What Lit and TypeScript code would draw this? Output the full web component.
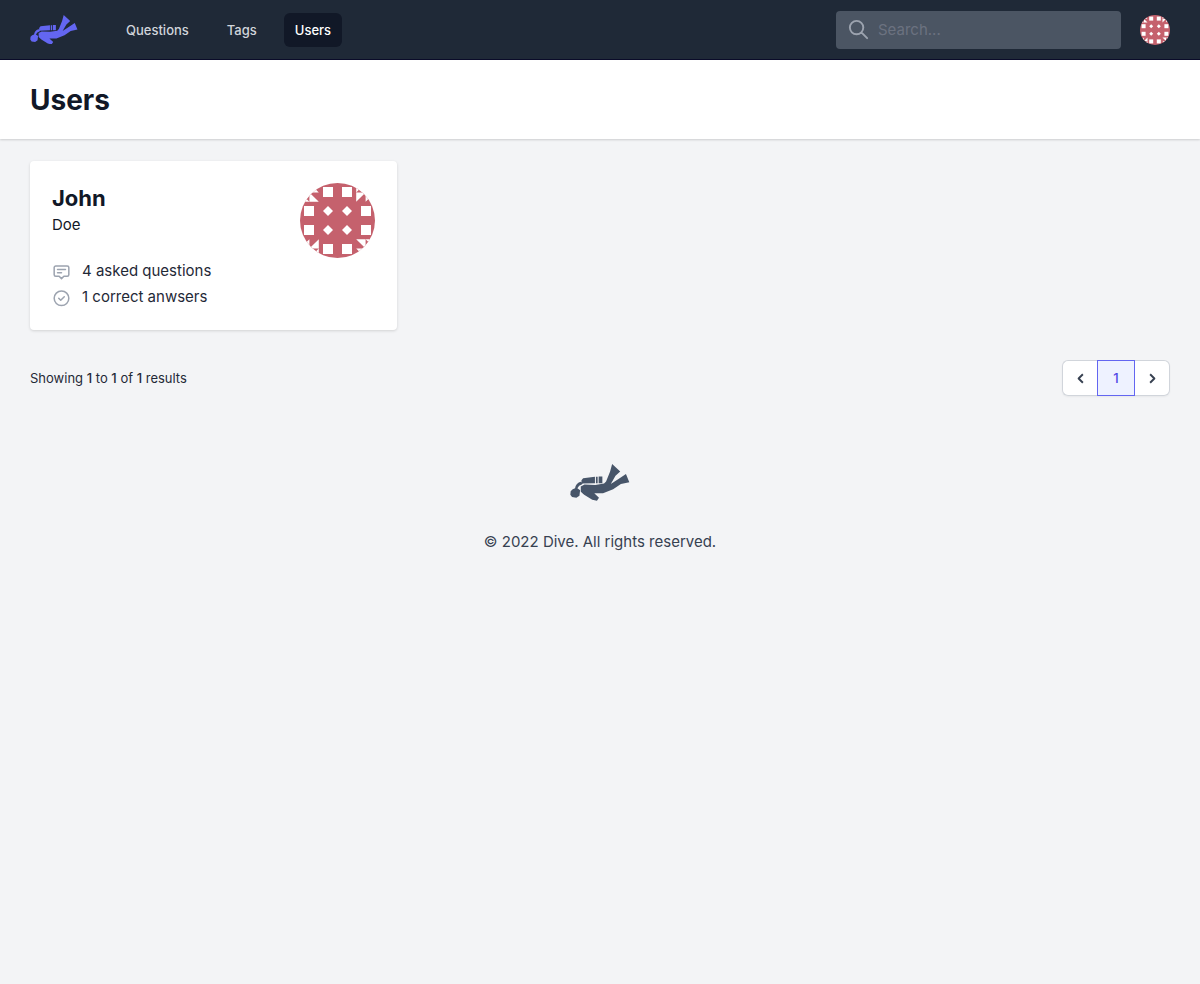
import { LitElement, html, css, svg } from "lit";
import { customElement, property } from "lit/decorators.js";

const squares = [[28, 9], [47, 9], [9, 28], [66, 28], [9, 47], [66, 47], [28, 66], [47, 66]];
const diamonds = [[28, 28], [47, 28], [28, 47], [47, 47]];

@customElement("dive-logo")
export class DiveLogo extends LitElement {
  static styles = css`
    :host { display: block; }
    .mark { display: block; width: 100%; height: auto; fill: currentColor; }
  `;
  render() {
    return html`<svg class="mark" viewBox="0 0 178 110" role="img" aria-label="Dive">
      <path d="M2 81 L8 75 L15 72 Q17 58 31 53 L38 56 L35 61 Q26 63 22 72 L30 78 L28 94 L19 100 L6 98 L1 91Z" />
      <path d="M39 42 L74 38 L74 57 L34 58 L34 48Z M77 38 L82 38 L82 57 L77 57Z M85 37 L96 37 L96 57 L85 57Z" />
      <path d="M32 67 L43 61 L75 62 L101 58 L107 52 L119 22 L125 0 L149 22 L135 35 L121 59 L145 44 L166 30 L176 54 L151 59 L128 75 L98 87 L72 87 L86 100 L80 109 L66 106 L42 91 L32 82Z" />
    </svg>`;
  }
}

@customElement("user-avatar")
export class UserAvatar extends LitElement {
  static styles = css`
    :host { display: block; border-radius: 50%; overflow: hidden; }
    .pattern { display: block; width: 100%; height: auto; }
  `;
  render() {
    return html`<svg class="pattern" viewBox="0 0 75 75" role="img" aria-label="John Doe">
      <rect width="75" height="75" fill="#c5616d" />
      <g fill="#fff">
        ${squares.map(([x, y]) => svg`<rect x=${x - 5} y=${y - 5} width="10" height="10" />`)}
        ${diamonds.map(([x, y]) => svg`<path d="M${x} ${y - 5}l5 5-5 5-5-5z" />`)}
        ${[0, 90, 180, 270].map((a) => svg`<path transform="rotate(${a} 37.5 37.5)" d="M9.400 0V9.400H18.800ZM9.400 9.400V18.800H18.800ZM0 9.400V18.800H9.400Z" />`)}
      </g>
    </svg>`;
  }
}

@customElement("app-root")
export class AppRoot extends LitElement {
  @property() query = "";

  static styles = css`
    :host {
      display: block;
      min-height: 100vh;
      background: #f3f4f6;
      color: #111827;
      font: 15px/22px Inter, sans-serif;
    }
    * { box-sizing: border-box; }
    h1, h2, p, ul { margin: 0; padding: 0; }
    ul { list-style: none; }
    a { color: inherit; text-decoration: none; }
    .bar {
      display: flex;
      align-items: center;
      height: 60px;
      padding: 0 30px;
      background: #1f2937;
      border-bottom: 1px solid #0b0c2a;
    }
    .brand { width: 48px; color: #6366f1; }
    .nav { display: flex; gap: 16px; margin-left: 37px; }
    .link {
      padding: 7px 11px;
      border-radius: 6px;
      color: #d1d5db;
      font-size: 13px;
      line-height: 20px;
      font-weight: 500;
    }
    .current { background: #111827; color: #fff; }
    .search {
      display: flex;
      align-items: center;
      gap: 8px;
      width: 25%;
      height: 38px;
      margin-left: auto;
      padding: 0 11px;
      border-radius: 4px;
      background: #4b5563;
      color: #9ca3af;
    }
    .glass { flex: none; width: 23px; height: 23px; }
    .field {
      flex: 1;
      min-width: 0;
      padding: 0;
      border: 0;
      outline: 0;
      background: none;
      color: #fff;
      font: inherit;
    }
    .field::placeholder { color: #6b7280; opacity: 1; }
    .account { padding: 0; border: 0; background: none; margin-left: 19px; border-radius: 50%; }
    .small { width: 30px; }
    .heading { padding: 22px 30px 21px; background: #fff; box-shadow: 0 1px 2px rgb(0 0 0 / 16%); }
    .title { font-size: 28px; line-height: 36px; font-weight: 700; }
    .content { padding: 22px 30px 0; }
    .grid { display: grid; grid-template-columns: repeat(3, minmax(0, 1fr)); gap: 19px; }
    .card {
      display: flex;
      align-items: flex-start;
      justify-content: space-between;
      padding: 22px;
      border-radius: 4px;
      background: #fff;
      box-shadow: 0 1px 3px rgb(0 0 0 / 14%);
    }
    .name { font-size: 22px; line-height: 31px; font-weight: 700; }
    .stats { display: grid; gap: 4px; margin-top: 24px; color: #1f2937; }
    .stat { display: flex; align-items: center; gap: 11px; }
    .icon { width: 19px; height: 19px; color: #9ca3af; }
    .large { width: 75px; }
    .results {
      display: flex;
      align-items: center;
      justify-content: space-between;
      margin-top: 30px;
      font-size: 13px;
      color: #1f2937;
    }
    .strong { font-weight: 500; }
    .pages { display: flex; border-radius: 6px; box-shadow: 0 1px 2px rgb(0 0 0 / 5%); }
    .page {
      display: grid;
      place-items: center;
      width: 35px;
      height: 36px;
      padding: 0;
      border: 1px solid #d1d5db;
      background: #fff;
      color: #374151;
      font: 500 13px/20px Inter, sans-serif;
    }
    .prev { border-right: 0; border-radius: 6px 0 0 6px; }
    .next { border-left: 0; border-radius: 0 6px 6px 0; }
    .active { width: 38px; border-color: #6366f1; background: #eef2ff; color: #4f46e5; }
    .arrow { width: 19px; height: 19px; }
    .foot { display: grid; justify-items: center; gap: 30px; padding: 68px 30px 45px; color: #374151; }
    .footmark { width: 60px; color: #475569; }
  `;

  render() {
    return html`
      <header class="bar">
        <a href="#"><dive-logo class="brand"></dive-logo></a>
        <nav class="nav">
          <a class="link" href="#questions">Questions</a>
          <a class="link" href="#tags">Tags</a>
          <a class="link current" href="#users" aria-current="page">Users</a>
        </nav>
        <label class="search">
          <svg class="glass" viewBox="0 0 24 24" fill="none" stroke="currentColor" stroke-width="2" stroke-linecap="round" aria-hidden="true">
            <path d="M21 21l-6-6m2-5a7 7 0 11-14 0 7 7 0 0114 0z" />
          </svg>
          <input class="field" type="search" placeholder="Search..." aria-label="Search" .value=${this.query} />
        </label>
        <button class="account" aria-label="Account"><user-avatar class="small"></user-avatar></button>
      </header>
      <div class="heading"><h1 class="title">Users</h1></div>
      <main class="content">
        <div class="grid">
          <article class="card">
            <div>
              <h2 class="name">John</h2>
              <p>Doe</p>
              <ul class="stats">
                <li class="stat">
                  <svg class="icon" viewBox="0 0 24 24" fill="none" stroke="currentColor" stroke-width="1.900" stroke-linecap="round" stroke-linejoin="round" aria-hidden="true">
                    <path d="M4.750 5h14.500a2 2 0 012 2v9a2 2 0 01-2 2H15l-3 3-3-3H4.750a2 2 0 01-2-2V7a2 2 0 012-2zM7 9.500h10M7 13.500h5" />
                  </svg>
                  4 asked questions
                </li>
                <li class="stat">
                  <svg class="icon" viewBox="0 0 24 24" fill="none" stroke="currentColor" stroke-width="1.900" stroke-linecap="round" stroke-linejoin="round" aria-hidden="true">
                    <circle cx="12" cy="13" r="9.250" />
                    <path d="M8.500 13l2.500 2.500 4.500-4.500" />
                  </svg>
                  1 correct anwsers
                </li>
              </ul>
            </div>
            <user-avatar class="large"></user-avatar>
          </article>
        </div>
        <div class="results">
          <p>Showing <span class="strong">1</span> to <span class="strong">1</span> of <span class="strong">1</span> results</p>
          <nav class="pages" aria-label="Pagination">
            <button class="page prev" aria-label="Previous">
              <svg class="arrow" viewBox="0 0 20 20" fill="none" stroke="currentColor" stroke-width="2" stroke-linejoin="round"><path d="M12.500 5.500l-4.500 4.500 4.500 4.500" /></svg>
            </button>
            <button class="page active" aria-current="page">1</button>
            <button class="page next" aria-label="Next">
              <svg class="arrow" viewBox="0 0 20 20" fill="none" stroke="currentColor" stroke-width="2" stroke-linejoin="round"><path d="M7.500 5.500l4.500 4.500-4.500 4.500" /></svg>
            </button>
          </nav>
        </div>
      </main>
      <footer class="foot">
        <dive-logo class="footmark"></dive-logo>
        <p>© 2022 Dive. All rights reserved.</p>
      </footer>
    `;
  }
}
